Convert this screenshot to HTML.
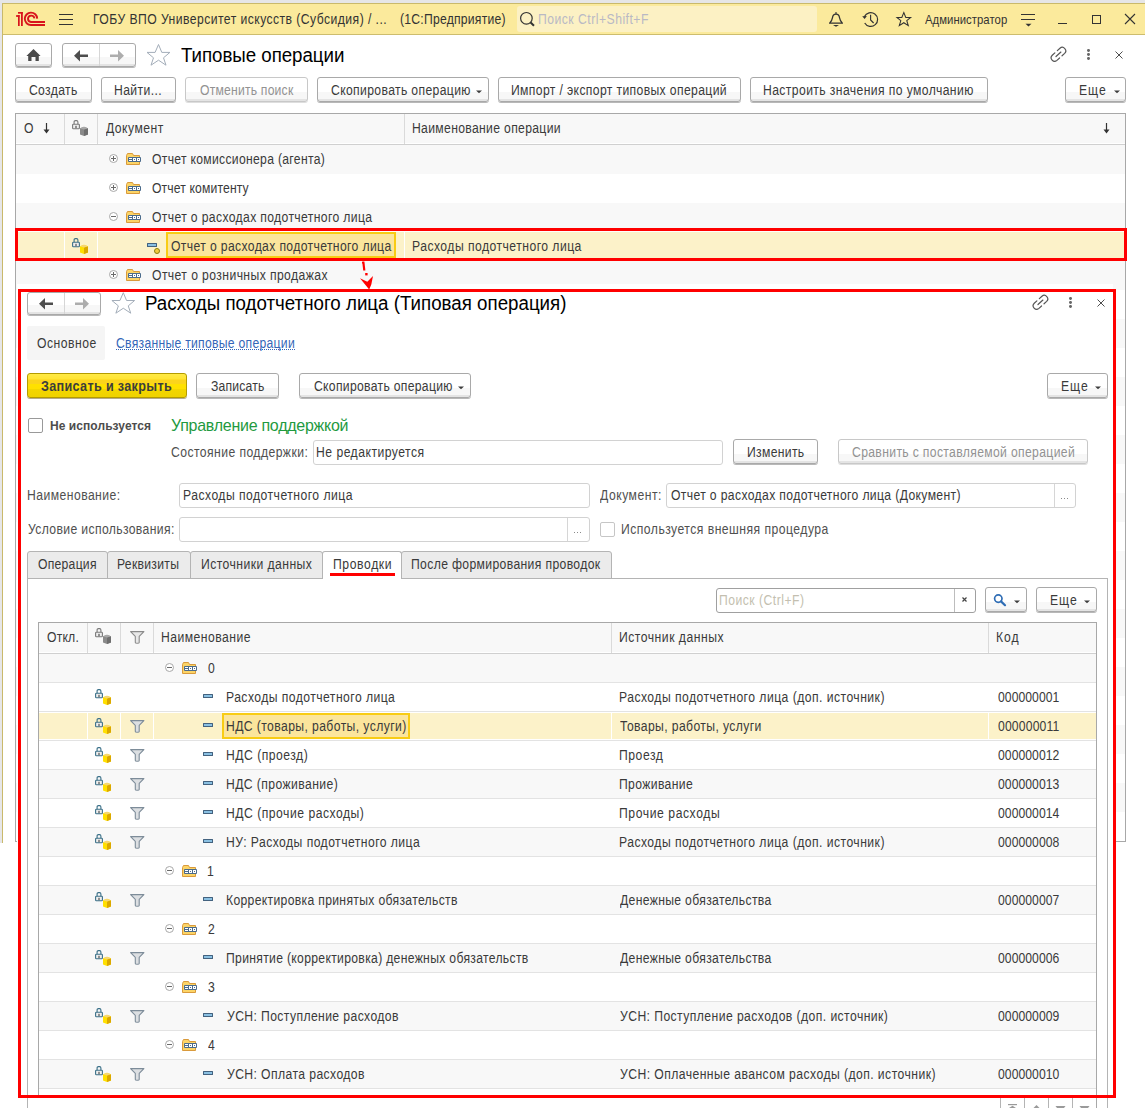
<!DOCTYPE html>
<html><head><meta charset="utf-8"><style>
*{box-sizing:border-box;margin:0;padding:0}
html,body{width:1145px;height:1108px;overflow:hidden;background:#fff}
body{position:relative;font-family:"Liberation Sans",sans-serif;font-size:13px;color:#333}
.a{position:absolute}
.t{position:absolute;white-space:nowrap;font-size:13px;line-height:16px;color:#333}
.btn{position:absolute;border:1px solid #a9a9a9;border-radius:3px;background:linear-gradient(to bottom,#fff 0,#fff calc(100% - 9px),#f7f7f7 calc(100% - 9px),#f7f7f7 calc(100% - 2px),#e4e4e4 calc(100% - 2px));box-shadow:0 1px 0 rgba(0,0,0,.28)}
.dis{border-color:#c4c4c4}
.red{position:absolute;border:3px solid #ff0000}
svg{position:absolute;overflow:visible}
</style></head><body>
<div class="a" style="left:0px;top:0px;width:1145px;height:3px;background:#e6e6e6;"></div>
<div class="a" style="left:0px;top:0px;width:2px;height:843px;background:#e6e6e8;"></div>
<div class="a" style="left:2px;top:3px;width:1143px;height:840px;background:#fff;border-left:1px solid #c9b96b;border-top:1px solid #c9b96b"></div>
<div class="a" style="left:3px;top:4px;width:1142px;height:30px;background:#fbea9c;"></div>
<div class="a" style="left:3px;top:34px;width:1142px;height:1px;background:#cdbd6e;"></div>
<div class="a" style="left:517px;top:6px;width:300px;height:26px;background:#fcf1c4;border-radius:3px"></div>
<div class="t" style="left:93.13px;top:11px;font-size:14px;line-height:16px;color:#333;font-weight:400;letter-spacing:0.506px;transform:scaleX(0.87);transform-origin:0 0;">ГОБУ ВПО Университет искусств (Субсидия) / ...</div>
<div class="t" style="left:400.00px;top:11px;font-size:14px;line-height:16px;color:#333;font-weight:400;letter-spacing:0.264px;transform:scaleX(0.87);transform-origin:0 0;">(1С:Предприятие)</div>
<div class="t" style="left:538.13px;top:11px;font-size:14px;line-height:16px;color:#b9b9c4;font-weight:400;letter-spacing:0.557px;transform:scaleX(0.87);transform-origin:0 0;">Поиск Ctrl+Shift+F</div>
<div class="t" style="left:925.00px;top:12px;font-size:13px;line-height:16px;color:#333;font-weight:400;letter-spacing:0.057px;transform:scaleX(0.87);transform-origin:0 0;">Администратор</div>
<div class="btn" style="left:15px;top:43px;width:37px;height:24px;"></div>
<div class="btn" style="left:62px;top:43px;width:74px;height:24px;"></div>
<div class="a" style="left:99px;top:44px;width:1px;height:22px;background:#d6d6d6;"></div>
<div class="t" style="left:180.50px;top:43px;font-size:19.5px;line-height:24px;color:#000;font-weight:400;letter-spacing:-0.048px;transform:scaleX(0.96);transform-origin:0 0;">Типовые операции</div>
<div class="btn" style="left:15px;top:77px;width:77px;height:25px;"></div>
<div class="t" style="left:29.00px;top:82px;font-size:14px;line-height:16px;color:#3a3a3a;font-weight:400;letter-spacing:0.377px;transform:scaleX(0.87);transform-origin:0 0;">Создать</div>
<div class="btn" style="left:101px;top:77px;width:75px;height:25px;"></div>
<div class="t" style="left:114.13px;top:82px;font-size:14px;line-height:16px;color:#3a3a3a;font-weight:400;letter-spacing:0.449px;transform:scaleX(0.87);transform-origin:0 0;">Найти...</div>
<div class="btn" style="left:185px;top:77px;width:123px;height:25px;border-color:#c8c8c8;box-shadow:0 1px 0 rgba(0,0,0,.13)"></div>
<div class="t" style="left:200.00px;top:82px;font-size:14px;line-height:16px;color:#929292;font-weight:400;letter-spacing:0.231px;transform:scaleX(0.87);transform-origin:0 0;">Отменить поиск</div>
<div class="btn" style="left:317px;top:77px;width:172px;height:25px;"></div>
<div class="t" style="left:331.00px;top:82px;font-size:14px;line-height:16px;color:#3a3a3a;font-weight:400;letter-spacing:0.405px;transform:scaleX(0.87);transform-origin:0 0;">Скопировать операцию</div>
<div class="btn" style="left:498px;top:77px;width:243px;height:25px;"></div>
<div class="t" style="left:511.13px;top:82px;font-size:14px;line-height:16px;color:#3a3a3a;font-weight:400;letter-spacing:0.414px;transform:scaleX(0.87);transform-origin:0 0;">Импорт / экспорт типовых операций</div>
<div class="btn" style="left:750px;top:77px;width:238px;height:25px;"></div>
<div class="t" style="left:763.13px;top:82px;font-size:14px;line-height:16px;color:#3a3a3a;font-weight:400;letter-spacing:0.450px;transform:scaleX(0.87);transform-origin:0 0;">Настроить значения по умолчанию</div>
<div class="btn" style="left:1065px;top:77px;width:61px;height:25px;"></div>
<div class="t" style="left:1079.13px;top:82px;font-size:14px;line-height:16px;color:#3a3a3a;font-weight:400;letter-spacing:1.093px;transform:scaleX(0.87);transform-origin:0 0;">Еще</div>
<div class="a" style="left:15px;top:113px;width:1111px;height:729px;background:#fff;border:1px solid #a8a8a8;border-bottom:none"></div>
<div class="a" style="left:16px;top:114px;width:1109px;height:29px;background:#f8f8f8;"></div>
<div class="a" style="left:16px;top:144px;width:1109px;height:1px;background:#d0d0d0;"></div>
<div class="a" style="left:64px;top:114px;width:1px;height:30px;background:#dadada;"></div>
<div class="a" style="left:97px;top:114px;width:1px;height:30px;background:#dadada;"></div>
<div class="a" style="left:404px;top:114px;width:1px;height:30px;background:#dadada;"></div>
<div class="a" style="left:16px;top:145px;width:1109px;height:29px;background:#f8f8f8;"></div>
<div class="a" style="left:16px;top:203px;width:1109px;height:29px;background:#f8f8f8;"></div>
<div class="a" style="left:16px;top:231px;width:1109px;height:1px;background:#fff;"></div>
<div class="a" style="left:16px;top:232px;width:1109px;height:28px;background:#fcf2c9;"></div>
<div class="a" style="left:16px;top:261px;width:1109px;height:29px;background:#f8f8f8;"></div>
<div class="a" style="left:16px;top:319px;width:1109px;height:29px;background:#f8f8f8;"></div>
<div class="a" style="left:16px;top:377px;width:1109px;height:29px;background:#f8f8f8;"></div>
<div class="a" style="left:16px;top:435px;width:1109px;height:29px;background:#f8f8f8;"></div>
<div class="a" style="left:16px;top:493px;width:1109px;height:29px;background:#f8f8f8;"></div>
<div class="a" style="left:16px;top:551px;width:1109px;height:29px;background:#f8f8f8;"></div>
<div class="a" style="left:16px;top:609px;width:1109px;height:29px;background:#f8f8f8;"></div>
<div class="a" style="left:16px;top:667px;width:1109px;height:29px;background:#f8f8f8;"></div>
<div class="a" style="left:16px;top:725px;width:1109px;height:29px;background:#f8f8f8;"></div>
<div class="a" style="left:16px;top:783px;width:1109px;height:29px;background:#f8f8f8;"></div>
<div class="a" style="left:15px;top:841px;width:1111px;height:1px;background:#a8a8a8;"></div>
<div class="t" style="left:24.00px;top:120px;font-size:14px;line-height:16px;color:#3a3a3a;font-weight:400;letter-spacing:0.000px;transform:scaleX(0.87);transform-origin:0 0;">О</div>
<div class="t" style="left:106.00px;top:120px;font-size:14px;line-height:16px;color:#3a3a3a;font-weight:400;letter-spacing:0.521px;transform:scaleX(0.87);transform-origin:0 0;">Документ</div>
<div class="t" style="left:412.13px;top:120px;font-size:14px;line-height:16px;color:#3a3a3a;font-weight:400;letter-spacing:0.373px;transform:scaleX(0.87);transform-origin:0 0;">Наименование операции</div>
<div class="t" style="left:151.50px;top:151px;font-size:14px;line-height:16px;color:#3a3a3a;font-weight:400;letter-spacing:0.339px;transform:scaleX(0.87);transform-origin:0 0;">Отчет комиссионера (агента)</div>
<div class="t" style="left:151.50px;top:180px;font-size:14px;line-height:16px;color:#3a3a3a;font-weight:400;letter-spacing:0.148px;transform:scaleX(0.87);transform-origin:0 0;">Отчет комитенту</div>
<div class="t" style="left:151.50px;top:209px;font-size:14px;line-height:16px;color:#3a3a3a;font-weight:400;letter-spacing:0.404px;transform:scaleX(0.87);transform-origin:0 0;">Отчет о расходах подотчетного лица</div>
<div class="t" style="left:151.50px;top:267px;font-size:14px;line-height:16px;color:#3a3a3a;font-weight:400;letter-spacing:0.461px;transform:scaleX(0.87);transform-origin:0 0;">Отчет о розничных продажах</div>
<div class="a" style="left:64px;top:232px;width:1px;height:28px;background:#fff;"></div>
<div class="a" style="left:97px;top:232px;width:1px;height:28px;background:#fff;"></div>
<div class="a" style="left:404px;top:232px;width:1px;height:28px;background:#fff;"></div>
<div class="a" style="left:166px;top:232px;width:230px;height:26px;background:#fbe59c;border:2px solid #f8cc14"></div>
<div class="t" style="left:170.50px;top:238px;font-size:14px;line-height:16px;color:#3a3a3a;font-weight:400;letter-spacing:0.411px;transform:scaleX(0.87);transform-origin:0 0;">Отчет о расходах подотчетного лица</div>
<div class="t" style="left:412.13px;top:238px;font-size:14px;line-height:16px;color:#3a3a3a;font-weight:400;letter-spacing:0.527px;transform:scaleX(0.87);transform-origin:0 0;">Расходы подотчетного лица</div>
<div class="a" style="left:17px;top:284px;width:1096px;height:824px;background:#fff;"></div>
<div class="btn" style="left:27px;top:292px;width:74px;height:23px;"></div>
<div class="a" style="left:64px;top:293px;width:1px;height:21px;background:#d6d6d6;"></div>
<div class="t" style="left:145.04px;top:291px;font-size:19.5px;line-height:24px;color:#000;font-weight:400;letter-spacing:0.004px;transform:scaleX(0.96);transform-origin:0 0;">Расходы подотчетного лица (Типовая операция)</div>
<div class="a" style="left:27px;top:326px;width:78px;height:34px;background:#f5f5f5;border-radius:2px"></div>
<div class="t" style="left:37.00px;top:335px;font-size:14px;line-height:16px;color:#3a3a3a;font-weight:400;letter-spacing:0.549px;transform:scaleX(0.87);transform-origin:0 0;">Основное</div>
<div class="t" style="left:116.00px;top:335px;font-size:14px;line-height:16px;color:#3566b8;font-weight:400;letter-spacing:0.315px;transform:scaleX(0.87);transform-origin:0 0;">Связанные типовые операции</div>
<div class="a" style="left:116px;top:349px;width:179px;height:1px;background:transparent;border-top:1px dotted #3566b8"></div>
<div class="a" style="left:27px;top:373px;width:160px;height:25px;border:1px solid #b49c00;border-radius:3px;background:linear-gradient(to bottom,#ffea45 0,#ffe433 5px,#fbd41c 6px,#fbd41c 10px,#ffe100 10px,#ffe000 15px,#f3d600 15px,#efd200 100%);box-shadow:0 1px 0 rgba(90,70,0,.45)"></div>
<div class="t" style="left:41.00px;top:378px;font-size:14px;line-height:16px;color:#3d3d3d;font-weight:700;letter-spacing:0.377px;transform:scaleX(0.9);transform-origin:0 0;">Записать и закрыть</div>
<div class="btn" style="left:196px;top:373px;width:83px;height:25px;"></div>
<div class="t" style="left:211.00px;top:378px;font-size:14px;line-height:16px;color:#3a3a3a;font-weight:400;letter-spacing:0.198px;transform:scaleX(0.87);transform-origin:0 0;">Записать</div>
<div class="btn" style="left:299px;top:373px;width:172px;height:25px;"></div>
<div class="t" style="left:314.00px;top:378px;font-size:14px;line-height:16px;color:#3a3a3a;font-weight:400;letter-spacing:0.345px;transform:scaleX(0.87);transform-origin:0 0;">Скопировать операцию</div>
<div class="btn" style="left:1047px;top:373px;width:61px;height:25px;"></div>
<div class="t" style="left:1061.13px;top:378px;font-size:14px;line-height:16px;color:#3a3a3a;font-weight:400;letter-spacing:1.093px;transform:scaleX(0.87);transform-origin:0 0;">Еще</div>
<div class="a" style="left:28px;top:418px;width:15px;height:15px;background:#fff;border:1px solid #999;border-radius:2px"></div>
<div class="t" style="left:50.00px;top:418px;font-size:12px;line-height:16px;color:#4d4d4d;font-weight:700;letter-spacing:0.065px;">Не используется</div>
<div class="t" style="left:171.00px;top:416px;font-size:17px;line-height:20px;color:#1f9a3f;font-weight:400;letter-spacing:-0.271px;transform:scaleX(0.94);transform-origin:0 0;">Управление поддержкой</div>
<div class="t" style="left:171.00px;top:444px;font-size:14px;line-height:16px;color:#505050;font-weight:400;letter-spacing:0.489px;transform:scaleX(0.87);transform-origin:0 0;">Состояние поддержки:</div>
<div class="a" style="left:313px;top:440px;width:410px;height:25px;background:#fff;border:1px solid #d2d2d2;border-radius:3px"></div>
<div class="t" style="left:316.13px;top:444px;font-size:14px;line-height:16px;color:#3a3a3a;font-weight:400;letter-spacing:0.547px;transform:scaleX(0.87);transform-origin:0 0;">Не редактируется</div>
<div class="btn" style="left:733px;top:439px;width:85px;height:25px;"></div>
<div class="t" style="left:747.13px;top:444px;font-size:14px;line-height:16px;color:#3a3a3a;font-weight:400;letter-spacing:0.359px;transform:scaleX(0.87);transform-origin:0 0;">Изменить</div>
<div class="btn" style="left:838px;top:439px;width:250px;height:25px;border-color:#c8c8c8;box-shadow:0 1px 0 rgba(0,0,0,.13)"></div>
<div class="t" style="left:852.00px;top:444px;font-size:14px;line-height:16px;color:#929292;font-weight:400;letter-spacing:0.390px;transform:scaleX(0.87);transform-origin:0 0;">Сравнить с поставляемой операцией</div>
<div class="t" style="left:26.63px;top:487px;font-size:14px;line-height:16px;color:#505050;font-weight:400;letter-spacing:0.510px;transform:scaleX(0.87);transform-origin:0 0;">Наименование:</div>
<div class="a" style="left:179px;top:483px;width:411px;height:25px;background:#fff;border:1px solid #d2d2d2;border-radius:3px"></div>
<div class="t" style="left:182.63px;top:487px;font-size:14px;line-height:16px;color:#3a3a3a;font-weight:400;letter-spacing:0.532px;transform:scaleX(0.87);transform-origin:0 0;">Расходы подотчетного лица</div>
<div class="t" style="left:600.00px;top:487px;font-size:14px;line-height:16px;color:#505050;font-weight:400;letter-spacing:0.579px;transform:scaleX(0.87);transform-origin:0 0;">Документ:</div>
<div class="a" style="left:666px;top:483px;width:410px;height:25px;background:#fff;border:1px solid #d2d2d2;border-radius:3px"></div>
<div class="a" style="left:1054px;top:484px;width:1px;height:23px;background:#d6d6d6;"></div>
<div class="a" style="left:1061px;top:498px;width:1px;height:1px;background:#8a8a8a;"></div>
<div class="a" style="left:1064px;top:498px;width:1px;height:1px;background:#8a8a8a;"></div>
<div class="a" style="left:1067px;top:498px;width:1px;height:1px;background:#8a8a8a;"></div>
<div class="t" style="left:671.00px;top:487px;font-size:14px;line-height:16px;color:#3a3a3a;font-weight:400;letter-spacing:0.408px;transform:scaleX(0.87);transform-origin:0 0;">Отчет о расходах подотчетного лица (Документ)</div>
<div class="t" style="left:27.50px;top:521px;font-size:14px;line-height:16px;color:#505050;font-weight:400;letter-spacing:0.412px;transform:scaleX(0.87);transform-origin:0 0;">Условие использования:</div>
<div class="a" style="left:179px;top:517px;width:411px;height:25px;background:#fff;border:1px solid #d2d2d2;border-radius:3px"></div>
<div class="a" style="left:567px;top:518px;width:1px;height:23px;background:#d6d6d6;"></div>
<div class="a" style="left:574px;top:532px;width:1px;height:1px;background:#8a8a8a;"></div>
<div class="a" style="left:577px;top:532px;width:1px;height:1px;background:#8a8a8a;"></div>
<div class="a" style="left:580px;top:532px;width:1px;height:1px;background:#8a8a8a;"></div>
<div class="a" style="left:600px;top:522px;width:15px;height:15px;background:#fff;border:1px solid #c6c6c6;border-radius:2px"></div>
<div class="t" style="left:620.63px;top:521px;font-size:14px;line-height:16px;color:#505050;font-weight:400;letter-spacing:0.535px;transform:scaleX(0.87);transform-origin:0 0;">Используется внешняя процедура</div>
<div class="a" style="left:27px;top:551px;width:81px;height:28px;background:#ebebeb;border:1px solid #b4b4b4;border-radius:3px 3px 0 0"></div>
<div class="t" style="left:38.00px;top:556px;font-size:14px;line-height:16px;color:#3a3a3a;font-weight:400;letter-spacing:0.286px;transform:scaleX(0.87);transform-origin:0 0;">Операция</div>
<div class="a" style="left:107px;top:551px;width:84px;height:28px;background:#ebebeb;border:1px solid #b4b4b4;border-radius:3px 3px 0 0"></div>
<div class="t" style="left:117.13px;top:556px;font-size:14px;line-height:16px;color:#3a3a3a;font-weight:400;letter-spacing:0.321px;transform:scaleX(0.87);transform-origin:0 0;">Реквизиты</div>
<div class="a" style="left:190px;top:551px;width:133px;height:28px;background:#ebebeb;border:1px solid #b4b4b4;border-radius:3px 3px 0 0"></div>
<div class="t" style="left:201.13px;top:556px;font-size:14px;line-height:16px;color:#3a3a3a;font-weight:400;letter-spacing:0.499px;transform:scaleX(0.87);transform-origin:0 0;">Источники данных</div>
<div class="a" style="left:401px;top:551px;width:211px;height:28px;background:#ebebeb;border:1px solid #b4b4b4;border-radius:3px 3px 0 0"></div>
<div class="t" style="left:411.13px;top:556px;font-size:14px;line-height:16px;color:#3a3a3a;font-weight:400;letter-spacing:0.403px;transform:scaleX(0.87);transform-origin:0 0;">После формирования проводок</div>
<div class="a" style="left:27px;top:578px;width:1081px;height:540px;background:#fff;border:1px solid #b4b4b4"></div>
<div class="a" style="left:322px;top:551px;width:80px;height:28px;background:#fff;border:1px solid #b4b4b4;border-bottom:none;border-radius:3px 3px 0 0"></div>
<div class="t" style="left:333.13px;top:556px;font-size:14px;line-height:16px;color:#3a3a3a;font-weight:400;letter-spacing:0.690px;transform:scaleX(0.87);transform-origin:0 0;">Проводки</div>
<div class="a" style="left:330px;top:573px;width:65px;height:3px;background:#ff0000;"></div>
<div class="a" style="left:716px;top:588px;width:260px;height:25px;background:#fff;border:1px solid #a0a0a0;border-radius:3px"></div>
<div class="a" style="left:954px;top:589px;width:1px;height:23px;background:#bdbdbd;"></div>
<div class="t" style="left:718.63px;top:592px;font-size:14px;line-height:16px;color:#c4bfb0;font-weight:400;letter-spacing:0.549px;transform:scaleX(0.87);transform-origin:0 0;">Поиск (Ctrl+F)</div>
<div class="btn" style="left:985px;top:587px;width:42px;height:25px;"></div>
<div class="btn" style="left:1036px;top:587px;width:61px;height:25px;"></div>
<div class="t" style="left:1050.13px;top:592px;font-size:14px;line-height:16px;color:#3a3a3a;font-weight:400;letter-spacing:1.093px;transform:scaleX(0.87);transform-origin:0 0;">Еще</div>
<div class="a" style="left:38px;top:622px;width:1059px;height:474px;background:#fff;border:1px solid #a8a8a8"></div>
<div class="a" style="left:39px;top:623px;width:1057px;height:29px;background:#f8f8f8;"></div>
<div class="a" style="left:39px;top:653px;width:1057px;height:1px;background:#d0d0d0;"></div>
<div class="a" style="left:87px;top:623px;width:1px;height:30px;background:#dadada;"></div>
<div class="a" style="left:120px;top:623px;width:1px;height:30px;background:#dadada;"></div>
<div class="a" style="left:153px;top:623px;width:1px;height:30px;background:#dadada;"></div>
<div class="a" style="left:611px;top:623px;width:1px;height:30px;background:#dadada;"></div>
<div class="a" style="left:988px;top:623px;width:1px;height:30px;background:#dadada;"></div>
<div class="a" style="left:39px;top:654px;width:1057px;height:28px;background:#f8f8f8;"></div>
<div class="a" style="left:39px;top:682px;width:1057px;height:1px;background:#e3e3e3;"></div>
<div class="a" style="left:39px;top:683px;width:1057px;height:28px;background:#fff;"></div>
<div class="a" style="left:39px;top:711px;width:1057px;height:1px;background:#e3e3e3;"></div>
<div class="a" style="left:39px;top:712px;width:1057px;height:28px;background:#fcf2c9;"></div>
<div class="a" style="left:39px;top:740px;width:1057px;height:1px;background:#e3e3e3;"></div>
<div class="a" style="left:39px;top:741px;width:1057px;height:28px;background:#fff;"></div>
<div class="a" style="left:39px;top:769px;width:1057px;height:1px;background:#e3e3e3;"></div>
<div class="a" style="left:39px;top:770px;width:1057px;height:28px;background:#f8f8f8;"></div>
<div class="a" style="left:39px;top:798px;width:1057px;height:1px;background:#e3e3e3;"></div>
<div class="a" style="left:39px;top:799px;width:1057px;height:28px;background:#fff;"></div>
<div class="a" style="left:39px;top:827px;width:1057px;height:1px;background:#e3e3e3;"></div>
<div class="a" style="left:39px;top:828px;width:1057px;height:28px;background:#f8f8f8;"></div>
<div class="a" style="left:39px;top:856px;width:1057px;height:1px;background:#e3e3e3;"></div>
<div class="a" style="left:39px;top:857px;width:1057px;height:28px;background:#fff;"></div>
<div class="a" style="left:39px;top:885px;width:1057px;height:1px;background:#e3e3e3;"></div>
<div class="a" style="left:39px;top:886px;width:1057px;height:28px;background:#f8f8f8;"></div>
<div class="a" style="left:39px;top:914px;width:1057px;height:1px;background:#e3e3e3;"></div>
<div class="a" style="left:39px;top:915px;width:1057px;height:28px;background:#fff;"></div>
<div class="a" style="left:39px;top:943px;width:1057px;height:1px;background:#e3e3e3;"></div>
<div class="a" style="left:39px;top:944px;width:1057px;height:28px;background:#f8f8f8;"></div>
<div class="a" style="left:39px;top:972px;width:1057px;height:1px;background:#e3e3e3;"></div>
<div class="a" style="left:39px;top:973px;width:1057px;height:28px;background:#fff;"></div>
<div class="a" style="left:39px;top:1001px;width:1057px;height:1px;background:#e3e3e3;"></div>
<div class="a" style="left:39px;top:1002px;width:1057px;height:28px;background:#f8f8f8;"></div>
<div class="a" style="left:39px;top:1030px;width:1057px;height:1px;background:#e3e3e3;"></div>
<div class="a" style="left:39px;top:1031px;width:1057px;height:28px;background:#fff;"></div>
<div class="a" style="left:39px;top:1059px;width:1057px;height:1px;background:#e3e3e3;"></div>
<div class="a" style="left:39px;top:1060px;width:1057px;height:28px;background:#f8f8f8;"></div>
<div class="a" style="left:39px;top:1088px;width:1057px;height:1px;background:#e3e3e3;"></div>
<div class="a" style="left:39px;top:712px;width:1057px;height:28px;background:#fff;"></div>
<div class="a" style="left:39px;top:713px;width:1057px;height:26px;background:#fcf2c9;"></div>
<div class="a" style="left:87px;top:713px;width:1px;height:26px;background:#fff;"></div>
<div class="a" style="left:120px;top:713px;width:1px;height:26px;background:#fff;"></div>
<div class="a" style="left:153px;top:713px;width:1px;height:26px;background:#fff;"></div>
<div class="a" style="left:611px;top:713px;width:1px;height:26px;background:#fff;"></div>
<div class="a" style="left:988px;top:713px;width:1px;height:26px;background:#fff;"></div>
<div class="a" style="left:222px;top:713px;width:188px;height:26px;background:#fbe59c;border:2px solid #f8cc14"></div>
<div class="t" style="left:47.00px;top:629px;font-size:14px;line-height:16px;color:#3a3a3a;font-weight:400;letter-spacing:0.220px;transform:scaleX(0.87);transform-origin:0 0;">Откл.</div>
<div class="t" style="left:161.13px;top:629px;font-size:14px;line-height:16px;color:#3a3a3a;font-weight:400;letter-spacing:0.537px;transform:scaleX(0.87);transform-origin:0 0;">Наименование</div>
<div class="t" style="left:619.13px;top:629px;font-size:14px;line-height:16px;color:#3a3a3a;font-weight:400;letter-spacing:0.570px;transform:scaleX(0.87);transform-origin:0 0;">Источник данных</div>
<div class="t" style="left:996.13px;top:629px;font-size:14px;line-height:16px;color:#3a3a3a;font-weight:400;letter-spacing:1.049px;transform:scaleX(0.87);transform-origin:0 0;">Код</div>
<div class="t" style="left:207.50px;top:660px;font-size:14px;line-height:16px;color:#3a3a3a;font-weight:400;letter-spacing:0.000px;transform:scaleX(0.87);transform-origin:0 0;">0</div>
<div class="t" style="left:225.63px;top:689px;font-size:14px;line-height:16px;color:#3a3a3a;font-weight:400;letter-spacing:0.504px;transform:scaleX(0.87);transform-origin:0 0;">Расходы подотчетного лица</div>
<div class="t" style="left:619.13px;top:689px;font-size:14px;line-height:16px;color:#3a3a3a;font-weight:400;letter-spacing:0.526px;transform:scaleX(0.87);transform-origin:0 0;">Расходы подотчетного лица (доп. источник)</div>
<div class="t" style="left:997.50px;top:689px;font-size:14px;line-height:16px;color:#3a3a3a;font-weight:400;letter-spacing:0.050px;transform:scaleX(0.87);transform-origin:0 0;">000000001</div>
<div class="t" style="left:225.63px;top:718px;font-size:14px;line-height:16px;color:#3a3a3a;font-weight:400;letter-spacing:0.454px;transform:scaleX(0.87);transform-origin:0 0;">НДС (товары, работы, услуги)</div>
<div class="t" style="left:620.00px;top:718px;font-size:14px;line-height:16px;color:#3a3a3a;font-weight:400;letter-spacing:0.445px;transform:scaleX(0.87);transform-origin:0 0;">Товары, работы, услуги</div>
<div class="t" style="left:997.50px;top:718px;font-size:14px;line-height:16px;color:#3a3a3a;font-weight:400;letter-spacing:0.180px;transform:scaleX(0.87);transform-origin:0 0;">000000011</div>
<div class="t" style="left:225.63px;top:747px;font-size:14px;line-height:16px;color:#3a3a3a;font-weight:400;letter-spacing:0.558px;transform:scaleX(0.87);transform-origin:0 0;">НДС (проезд)</div>
<div class="t" style="left:619.13px;top:747px;font-size:14px;line-height:16px;color:#3a3a3a;font-weight:400;letter-spacing:0.617px;transform:scaleX(0.87);transform-origin:0 0;">Проезд</div>
<div class="t" style="left:997.50px;top:747px;font-size:14px;line-height:16px;color:#3a3a3a;font-weight:400;letter-spacing:0.050px;transform:scaleX(0.87);transform-origin:0 0;">000000012</div>
<div class="t" style="left:225.63px;top:776px;font-size:14px;line-height:16px;color:#3a3a3a;font-weight:400;letter-spacing:0.463px;transform:scaleX(0.87);transform-origin:0 0;">НДС (проживание)</div>
<div class="t" style="left:619.13px;top:776px;font-size:14px;line-height:16px;color:#3a3a3a;font-weight:400;letter-spacing:0.416px;transform:scaleX(0.87);transform-origin:0 0;">Проживание</div>
<div class="t" style="left:997.50px;top:776px;font-size:14px;line-height:16px;color:#3a3a3a;font-weight:400;letter-spacing:0.050px;transform:scaleX(0.87);transform-origin:0 0;">000000013</div>
<div class="t" style="left:225.63px;top:805px;font-size:14px;line-height:16px;color:#3a3a3a;font-weight:400;letter-spacing:0.567px;transform:scaleX(0.87);transform-origin:0 0;">НДС (прочие расходы)</div>
<div class="t" style="left:619.13px;top:805px;font-size:14px;line-height:16px;color:#3a3a3a;font-weight:400;letter-spacing:0.648px;transform:scaleX(0.87);transform-origin:0 0;">Прочие расходы</div>
<div class="t" style="left:997.50px;top:805px;font-size:14px;line-height:16px;color:#3a3a3a;font-weight:400;letter-spacing:0.050px;transform:scaleX(0.87);transform-origin:0 0;">000000014</div>
<div class="t" style="left:225.63px;top:834px;font-size:14px;line-height:16px;color:#3a3a3a;font-weight:400;letter-spacing:0.508px;transform:scaleX(0.87);transform-origin:0 0;">НУ: Расходы подотчетного лица</div>
<div class="t" style="left:619.13px;top:834px;font-size:14px;line-height:16px;color:#3a3a3a;font-weight:400;letter-spacing:0.526px;transform:scaleX(0.87);transform-origin:0 0;">Расходы подотчетного лица (доп. источник)</div>
<div class="t" style="left:997.50px;top:834px;font-size:14px;line-height:16px;color:#3a3a3a;font-weight:400;letter-spacing:0.050px;transform:scaleX(0.87);transform-origin:0 0;">000000008</div>
<div class="t" style="left:206.63px;top:863px;font-size:14px;line-height:16px;color:#3a3a3a;font-weight:400;letter-spacing:0.000px;transform:scaleX(0.87);transform-origin:0 0;">1</div>
<div class="t" style="left:225.63px;top:892px;font-size:14px;line-height:16px;color:#3a3a3a;font-weight:400;letter-spacing:0.364px;transform:scaleX(0.87);transform-origin:0 0;">Корректировка принятых обязательств</div>
<div class="t" style="left:620.00px;top:892px;font-size:14px;line-height:16px;color:#3a3a3a;font-weight:400;letter-spacing:0.374px;transform:scaleX(0.87);transform-origin:0 0;">Денежные обязательства</div>
<div class="t" style="left:997.50px;top:892px;font-size:14px;line-height:16px;color:#3a3a3a;font-weight:400;letter-spacing:0.050px;transform:scaleX(0.87);transform-origin:0 0;">000000007</div>
<div class="t" style="left:207.50px;top:921px;font-size:14px;line-height:16px;color:#3a3a3a;font-weight:400;letter-spacing:0.000px;transform:scaleX(0.87);transform-origin:0 0;">2</div>
<div class="t" style="left:225.63px;top:950px;font-size:14px;line-height:16px;color:#3a3a3a;font-weight:400;letter-spacing:0.354px;transform:scaleX(0.87);transform-origin:0 0;">Принятие (корректировка) денежных обязательств</div>
<div class="t" style="left:620.00px;top:950px;font-size:14px;line-height:16px;color:#3a3a3a;font-weight:400;letter-spacing:0.374px;transform:scaleX(0.87);transform-origin:0 0;">Денежные обязательства</div>
<div class="t" style="left:997.50px;top:950px;font-size:14px;line-height:16px;color:#3a3a3a;font-weight:400;letter-spacing:0.050px;transform:scaleX(0.87);transform-origin:0 0;">000000006</div>
<div class="t" style="left:207.50px;top:979px;font-size:14px;line-height:16px;color:#3a3a3a;font-weight:400;letter-spacing:0.000px;transform:scaleX(0.87);transform-origin:0 0;">3</div>
<div class="t" style="left:226.50px;top:1008px;font-size:14px;line-height:16px;color:#3a3a3a;font-weight:400;letter-spacing:0.448px;transform:scaleX(0.87);transform-origin:0 0;">УСН: Поступление расходов</div>
<div class="t" style="left:620.00px;top:1008px;font-size:14px;line-height:16px;color:#3a3a3a;font-weight:400;letter-spacing:0.487px;transform:scaleX(0.87);transform-origin:0 0;">УСН: Поступление расходов (доп. источник)</div>
<div class="t" style="left:997.50px;top:1008px;font-size:14px;line-height:16px;color:#3a3a3a;font-weight:400;letter-spacing:0.050px;transform:scaleX(0.87);transform-origin:0 0;">000000009</div>
<div class="t" style="left:207.50px;top:1037px;font-size:14px;line-height:16px;color:#3a3a3a;font-weight:400;letter-spacing:0.000px;transform:scaleX(0.87);transform-origin:0 0;">4</div>
<div class="t" style="left:226.50px;top:1066px;font-size:14px;line-height:16px;color:#3a3a3a;font-weight:400;letter-spacing:0.463px;transform:scaleX(0.87);transform-origin:0 0;">УСН: Оплата расходов</div>
<div class="t" style="left:620.00px;top:1066px;font-size:14px;line-height:16px;color:#3a3a3a;font-weight:400;letter-spacing:0.502px;transform:scaleX(0.87);transform-origin:0 0;">УСН: Оплаченные авансом расходы (доп. источник)</div>
<div class="t" style="left:997.50px;top:1066px;font-size:14px;line-height:16px;color:#3a3a3a;font-weight:400;letter-spacing:0.050px;transform:scaleX(0.87);transform-origin:0 0;">000000010</div>
<div class="a" style="left:1000px;top:1098px;width:1px;height:10px;background:#b4b4b4;"></div>
<div class="a" style="left:1024px;top:1098px;width:1px;height:10px;background:#b4b4b4;"></div>
<div class="a" style="left:1048px;top:1098px;width:1px;height:10px;background:#b4b4b4;"></div>
<div class="a" style="left:1072px;top:1098px;width:1px;height:10px;background:#b4b4b4;"></div>
<svg style="left:0px;top:0px;" width="60" height="34" viewBox="0 0 60 34"><rect x="18" y="12" width="4.8" height="1.7" fill="#d8141c"/><rect x="21" y="12" width="1.8" height="14" fill="#d8141c"/><rect x="16.1" y="15.1" width="3.5" height="1.8" fill="#d8141c"/><rect x="18" y="15.1" width="1.7" height="10.9" fill="#d8141c"/><path d="M37.2,18.6 A6.2,6.2 0 1 0 31,25 L45,25" fill="none" stroke="#d8141c" stroke-width="1.9"/><path d="M34.4,18.4 A3.2,3.2 0 1 0 31,22 L45,22" fill="none" stroke="#d8141c" stroke-width="1.9"/></svg>
<div class="a" style="left:59px;top:14px;width:14px;height:1px;background:#333;height:1.4px"></div>
<div class="a" style="left:59px;top:19px;width:14px;height:1px;background:#333;height:1.4px"></div>
<div class="a" style="left:59px;top:24px;width:14px;height:1px;background:#333;height:1.4px"></div>
<svg style="left:515px;top:6px;" width="30" height="26" viewBox="0 0 30 26"><circle cx="11.4" cy="12.3" r="5.8" fill="none" stroke="#333" stroke-width="1.2"/><path d="M15.6,16.5 L19,19.8" stroke="#333" stroke-width="2"/></svg>
<svg style="left:826px;top:8px;" width="20" height="22" viewBox="0 0 20 22"><rect x="9.4" y="4.1" width="1.2" height="1.8" fill="#333"/><path d="M3.6,15.2 C5.6,13.2 6.2,11.5 6.5,9.6 C6.8,7 7.6,6.1 10,6.1 C12.4,6.1 13.2,7 13.5,9.6 C13.8,11.5 14.4,13.2 16.4,15.2 Z" fill="none" stroke="#333" stroke-width="1.25" stroke-linejoin="round"/><path d="M7,17 L13,17 L10,18.8 Z" fill="#333"/></svg>
<svg style="left:860px;top:9px;" width="22" height="22" viewBox="0 0 22 22"><path d="M4.45,7.58 A6.9,6.9 0 1 1 4.72,13.95" fill="none" stroke="#333" stroke-width="1.2"/><path d="M2.2,7.2 L6.9,7.0 L4.6,9.9 Z" fill="#333"/><path d="M10.6,5.8 L10.6,11 L13.6,14" fill="none" stroke="#333" stroke-width="1.15"/></svg>
<svg style="left:894px;top:9px;" width="20" height="20" viewBox="0 0 20 20"><g transform="translate(9.8 10) scale(0.9) translate(-10 -10)"><path d="M10,2.8 L12.2,8.3 L17.6,8.3 L13.3,11.8 L15,17.3 L10,14.1 L5,17.3 L6.7,11.8 L2.4,8.3 L7.8,8.3 Z" fill="none" stroke="#333" stroke-width="1.15" stroke-linejoin="miter"/></g></svg>
<div class="a" style="left:1021px;top:14px;width:14px;height:1px;background:#333;height:1.3px"></div>
<div class="a" style="left:1021px;top:19px;width:14px;height:1px;background:#333;height:1.3px"></div>
<svg style="left:1024px;top:23px;" width="10" height="5" viewBox="0 0 10 5"><path d="M1.5,0.8 L7.5,0.8 L4.5,3.6 Z" fill="#333"/></svg>
<div class="a" style="left:1058px;top:23px;width:9px;height:1px;background:#333;height:1.3px"></div>
<div class="a" style="left:1092px;top:15px;width:9px;height:9px;background:transparent;border:1.3px solid #333"></div>
<svg style="left:1124px;top:13px;" width="12" height="12" viewBox="0 0 12 12"><path d="M1,1 L11,11 M11,1 L1,11" stroke="#333" stroke-width="1.1"/></svg>
<svg style="left:24px;top:47px;" width="18" height="16" viewBox="0 0 18 16"><path d="M9.5,2 L16.6,9 L14.8,9 L14.8,14 L11.5,14 L11.5,10 L7.5,10 L7.5,14 L4.2,14 L4.2,9 L2.4,9 Z" fill="#4a4a4a"/></svg>
<svg style="left:74px;top:50px;" width="16" height="12" viewBox="0 0 16 12"><path d="M0,5.7 L6,0 L6,4.4 L14,4.4 L14,7 L6,7 L6,11.4 Z" fill="#4d4d4d"/></svg>
<svg style="left:110px;top:50px;" width="16" height="12" viewBox="0 0 16 12"><path d="M14,5.7 L8,0 L8,4.4 L0,4.4 L0,7 L8,7 L8,11.4 Z" fill="#adadad"/></svg>
<svg style="left:39px;top:298px;" width="16" height="12" viewBox="0 0 16 12"><path d="M0,5.7 L6,0 L6,4.4 L14,4.4 L14,7 L6,7 L6,11.4 Z" fill="#4d4d4d"/></svg>
<svg style="left:75px;top:298px;" width="16" height="12" viewBox="0 0 16 12"><path d="M14,5.7 L8,0 L8,4.4 L0,4.4 L0,7 L8,7 L8,11.4 Z" fill="#adadad"/></svg>
<svg style="left:0;top:0" width="1145" height="1108"><polygon points="158.50,44.50 161.80,52.40 169.90,52.40 163.50,57.80 166.00,65.20 158.50,60.20 151.00,65.20 153.50,57.80 147.00,52.40 155.10,52.40" fill="none" stroke="#a3adb9" stroke-width="1"/></svg>
<svg style="left:0;top:0" width="1145" height="1108"><polygon points="123.30,292.70 126.57,300.52 134.59,300.52 128.25,305.87 130.72,313.19 123.30,308.24 115.88,313.19 118.35,305.87 111.91,300.52 119.93,300.52" fill="none" stroke="#a3adb9" stroke-width="1"/></svg>
<svg style="left:1049px;top:45px;" width="18" height="18" viewBox="0 0 18 18"><g fill="none" stroke="#555" stroke-width="1.2" stroke-linecap="round"><path d="M8.33,5.59 L10.95,3.21 A3.5,3.5 0 0 1 15.65,8.39 L13.04,10.77"/><path d="M10.57,13.01 L7.95,15.39 A3.5,3.5 0 0 1 3.25,10.21 L5.86,7.83"/><path d="M6.99,11.54 L11.91,7.06"/></g></svg>
<div class="a" style="left:1087.0px;top:48.800000000000004px;width:2.8px;height:2.8px;border-radius:50%;background:#666"></div>
<div class="a" style="left:1087.0px;top:52.800000000000004px;width:2.8px;height:2.8px;border-radius:50%;background:#666"></div>
<div class="a" style="left:1087.0px;top:56.800000000000004px;width:2.8px;height:2.8px;border-radius:50%;background:#666"></div>
<svg style="left:1114.5px;top:50.5px;" width="8" height="8" viewBox="0 0 8 8"><path d="M0.5,0.5 L7.5,7.5 M7.5,0.5 L0.5,7.5" stroke="#444" stroke-width="0.95"/></svg>
<svg style="left:1031px;top:293px;" width="18" height="18" viewBox="0 0 18 18"><g fill="none" stroke="#555" stroke-width="1.2" stroke-linecap="round"><path d="M8.33,5.59 L10.95,3.21 A3.5,3.5 0 0 1 15.65,8.39 L13.04,10.77"/><path d="M10.57,13.01 L7.95,15.39 A3.5,3.5 0 0 1 3.25,10.21 L5.86,7.83"/><path d="M6.99,11.54 L11.91,7.06"/></g></svg>
<div class="a" style="left:1069.0px;top:296.8px;width:2.8px;height:2.8px;border-radius:50%;background:#666"></div>
<div class="a" style="left:1069.0px;top:300.8px;width:2.8px;height:2.8px;border-radius:50%;background:#666"></div>
<div class="a" style="left:1069.0px;top:304.8px;width:2.8px;height:2.8px;border-radius:50%;background:#666"></div>
<svg style="left:1096.5px;top:298.5px;" width="8" height="8" viewBox="0 0 8 8"><path d="M0.5,0.5 L7.5,7.5 M7.5,0.5 L0.5,7.5" stroke="#444" stroke-width="0.95"/></svg>
<svg style="left:476px;top:89.5px;" width="7" height="4" viewBox="0 0 7 4"><path d="M0,0.5 L6,0.5 L3,3.3 Z" fill="#3c3c3c"/></svg>
<svg style="left:1113.5px;top:89.5px;" width="7" height="4" viewBox="0 0 7 4"><path d="M0,0.5 L6,0.5 L3,3.3 Z" fill="#3c3c3c"/></svg>
<svg style="left:458px;top:386px;" width="7" height="4" viewBox="0 0 7 4"><path d="M0,0.5 L6,0.5 L3,3.3 Z" fill="#3c3c3c"/></svg>
<svg style="left:1095px;top:386px;" width="7" height="4" viewBox="0 0 7 4"><path d="M0,0.5 L6,0.5 L3,3.3 Z" fill="#3c3c3c"/></svg>
<svg style="left:1014px;top:600px;" width="7" height="4" viewBox="0 0 7 4"><path d="M0,0.5 L6,0.5 L3,3.3 Z" fill="#3c3c3c"/></svg>
<svg style="left:1084px;top:600px;" width="7" height="4" viewBox="0 0 7 4"><path d="M0,0.5 L6,0.5 L3,3.3 Z" fill="#3c3c3c"/></svg>
<svg style="left:962px;top:597px;" width="5" height="5" viewBox="0 0 5 5"><path d="M0.5,0.5 L4.5,4.5 M4.5,0.5 L0.5,4.5" stroke="#444" stroke-width="1.2"/></svg>
<svg style="left:990px;top:592px;" width="20" height="18" viewBox="0 0 20 18"><circle cx="8.3" cy="6.6" r="3.7" fill="none" stroke="#2f6db5" stroke-width="1.7"/><path d="M11,9.4 L15,13.2" stroke="#2f6db5" stroke-width="2.2" stroke-linecap="round"/></svg>
<svg style="left:43px;top:123px;" width="8" height="12" viewBox="0 0 8 12"><path d="M3.5,0 L3.5,9" stroke="#333" stroke-width="1.2"/><path d="M0.5,6.5 L3.5,10.5 L6.5,6.5 Z" fill="#333"/></svg>
<svg style="left:1103px;top:123px;" width="8" height="12" viewBox="0 0 8 12"><path d="M3.5,0 L3.5,9" stroke="#333" stroke-width="1.2"/><path d="M0.5,6.5 L3.5,10.5 L6.5,6.5 Z" fill="#333"/></svg>
<svg style="left:72.4px;top:237.5px" width="18" height="18" viewBox="0 0 18 18"><path d="M2.1,4.2 L2.1,1.9 Q2.1,0.6 3.4,0.6 L4.6,0.6 Q5.9,0.6 5.9,1.9 L5.9,4.2" fill="none" stroke="#3b7088" stroke-width="1.1"/><rect x="0.6" y="4.2" width="6.8" height="4.6" rx="0.8" fill="#eee" stroke="#3b7088" stroke-width="1.1"/><rect x="3.5" y="5.8" width="1" height="2.4" fill="#333"/><path d="M8,8.2 L12,6.8 L16,8.2 L16,14.6 L12,16 L8,14.6 Z" fill="#ffdf00"/><path d="M12,9.6 L16,8.2 L16,14.6 L12,16 Z" fill="#dba800"/><path d="M8,8.2 L12,6.8 L16,8.2 L12,9.6 Z" fill="#f6d574"/></svg>
<svg style="left:72.4px;top:120.2px" width="18" height="18" viewBox="0 0 18 18"><path d="M2.1,4.2 L2.1,1.9 Q2.1,0.6 3.4,0.6 L4.6,0.6 Q5.9,0.6 5.9,1.9 L5.9,4.2" fill="none" stroke="#7a7a7a" stroke-width="1.1"/><rect x="0.6" y="4.2" width="6.8" height="4.6" rx="0.8" fill="#eee" stroke="#7a7a7a" stroke-width="1.1"/><rect x="3.5" y="5.8" width="1" height="2.4" fill="#333"/><path d="M8,8.2 L12,6.8 L16,8.2 L16,14.6 L12,16 L8,14.6 Z" fill="#8a8a8a"/><path d="M12,9.6 L16,8.2 L16,14.6 L12,16 Z" fill="#6f6f6f"/><path d="M8,8.2 L12,6.8 L16,8.2 L12,9.6 Z" fill="#a8a8a8"/></svg>
<svg style="left:95.4px;top:628.4px" width="18" height="18" viewBox="0 0 18 18"><path d="M2.1,4.2 L2.1,1.9 Q2.1,0.6 3.4,0.6 L4.6,0.6 Q5.9,0.6 5.9,1.9 L5.9,4.2" fill="none" stroke="#7a7a7a" stroke-width="1.1"/><rect x="0.6" y="4.2" width="6.8" height="4.6" rx="0.8" fill="#eee" stroke="#7a7a7a" stroke-width="1.1"/><rect x="3.5" y="5.8" width="1" height="2.4" fill="#333"/><path d="M8,8.2 L12,6.8 L16,8.2 L16,14.6 L12,16 L8,14.6 Z" fill="#8a8a8a"/><path d="M12,9.6 L16,8.2 L16,14.6 L12,16 Z" fill="#6f6f6f"/><path d="M8,8.2 L12,6.8 L16,8.2 L12,9.6 Z" fill="#a8a8a8"/></svg>
<svg style="left:129.6px;top:630.8px;" width="15" height="13" viewBox="0 0 15 13"><path d="M0.6,0.6 L13.9,0.6 L9.2,5.4 L9.2,11.4 C9.2,12 8.8,12.2 7.25,12.2 C5.7,12.2 5.3,12 5.3,11.4 L5.3,5.4 Z" fill="#e8e8e8" stroke="#8a8a8a" stroke-width="1.1" stroke-linejoin="round"/></svg>
<svg style="left:109px;top:154px;" width="9" height="9" viewBox="0 0 9 9"><circle cx="4.5" cy="4.5" r="4" fill="#fff" stroke="#a9a9a9" stroke-width="1"/><rect x="2" y="4" width="5" height="1" fill="#6a6a6a"/><rect x="4" y="2" width="1" height="5" fill="#6a6a6a"/></svg>
<svg style="left:126px;top:153px;" width="16" height="13" viewBox="0 0 16 13"><path d="M0.5,2.5 L1.5,0.5 L6.5,0.5 L7.5,2.5 L13.5,2.5 L13.5,11.5 L0.5,11.5 Z" fill="#fcd466" stroke="#d99a3c" stroke-width="1" stroke-linejoin="round"/><rect x="2" y="4" width="13" height="5" rx="1" fill="#4b6b8b"/><rect x="3" y="5" width="3" height="1" fill="#fff"/><rect x="3" y="7" width="3" height="1" fill="#fff"/><rect x="7" y="5" width="3" height="3" fill="#fff"/><rect x="11" y="5" width="3" height="3" fill="#fff"/><rect x="8" y="6" width="1" height="1" fill="#4b6b8b"/><rect x="12" y="6" width="1" height="1" fill="#4b6b8b"/></svg>
<svg style="left:109px;top:183px;" width="9" height="9" viewBox="0 0 9 9"><circle cx="4.5" cy="4.5" r="4" fill="#fff" stroke="#a9a9a9" stroke-width="1"/><rect x="2" y="4" width="5" height="1" fill="#6a6a6a"/><rect x="4" y="2" width="1" height="5" fill="#6a6a6a"/></svg>
<svg style="left:126px;top:182px;" width="16" height="13" viewBox="0 0 16 13"><path d="M0.5,2.5 L1.5,0.5 L6.5,0.5 L7.5,2.5 L13.5,2.5 L13.5,11.5 L0.5,11.5 Z" fill="#fcd466" stroke="#d99a3c" stroke-width="1" stroke-linejoin="round"/><rect x="2" y="4" width="13" height="5" rx="1" fill="#4b6b8b"/><rect x="3" y="5" width="3" height="1" fill="#fff"/><rect x="3" y="7" width="3" height="1" fill="#fff"/><rect x="7" y="5" width="3" height="3" fill="#fff"/><rect x="11" y="5" width="3" height="3" fill="#fff"/><rect x="8" y="6" width="1" height="1" fill="#4b6b8b"/><rect x="12" y="6" width="1" height="1" fill="#4b6b8b"/></svg>
<svg style="left:109px;top:212px;" width="9" height="9" viewBox="0 0 9 9"><circle cx="4.5" cy="4.5" r="4" fill="#fff" stroke="#a9a9a9" stroke-width="1"/><rect x="2" y="4" width="5" height="1" fill="#6a6a6a"/></svg>
<svg style="left:126px;top:211px;" width="16" height="13" viewBox="0 0 16 13"><path d="M0.5,2.5 L1.5,0.5 L6.5,0.5 L7.5,2.5 L13.5,2.5 L13.5,11.5 L0.5,11.5 Z" fill="#fcd466" stroke="#d99a3c" stroke-width="1" stroke-linejoin="round"/><rect x="2" y="4" width="13" height="5" rx="1" fill="#4b6b8b"/><rect x="3" y="5" width="3" height="1" fill="#fff"/><rect x="3" y="7" width="3" height="1" fill="#fff"/><rect x="7" y="5" width="3" height="3" fill="#fff"/><rect x="11" y="5" width="3" height="3" fill="#fff"/><rect x="8" y="6" width="1" height="1" fill="#4b6b8b"/><rect x="12" y="6" width="1" height="1" fill="#4b6b8b"/></svg>
<svg style="left:109px;top:270px;" width="9" height="9" viewBox="0 0 9 9"><circle cx="4.5" cy="4.5" r="4" fill="#fff" stroke="#a9a9a9" stroke-width="1"/><rect x="2" y="4" width="5" height="1" fill="#6a6a6a"/><rect x="4" y="2" width="1" height="5" fill="#6a6a6a"/></svg>
<svg style="left:126px;top:269px;" width="16" height="13" viewBox="0 0 16 13"><path d="M0.5,2.5 L1.5,0.5 L6.5,0.5 L7.5,2.5 L13.5,2.5 L13.5,11.5 L0.5,11.5 Z" fill="#fcd466" stroke="#d99a3c" stroke-width="1" stroke-linejoin="round"/><rect x="2" y="4" width="13" height="5" rx="1" fill="#4b6b8b"/><rect x="3" y="5" width="3" height="1" fill="#fff"/><rect x="3" y="7" width="3" height="1" fill="#fff"/><rect x="7" y="5" width="3" height="3" fill="#fff"/><rect x="11" y="5" width="3" height="3" fill="#fff"/><rect x="8" y="6" width="1" height="1" fill="#4b6b8b"/><rect x="12" y="6" width="1" height="1" fill="#4b6b8b"/></svg>
<div class="a" style="left:147px;top:243px;width:10px;height:4px;background:#8ac0e2;border:1px solid #43627f;border-radius:0.5px"></div>
<div class="a" style="left:154px;top:248px;width:6px;height:6px;border-radius:50%;background:#f5cd3c;border:1px solid #8d7f0c"></div>
<svg style="left:165px;top:663px;" width="9" height="9" viewBox="0 0 9 9"><circle cx="4.5" cy="4.5" r="4" fill="#fff" stroke="#a9a9a9" stroke-width="1"/><rect x="2" y="4" width="5" height="1" fill="#6a6a6a"/></svg>
<svg style="left:182px;top:662px;" width="16" height="13" viewBox="0 0 16 13"><path d="M0.5,2.5 L1.5,0.5 L6.5,0.5 L7.5,2.5 L13.5,2.5 L13.5,11.5 L0.5,11.5 Z" fill="#fcd466" stroke="#d99a3c" stroke-width="1" stroke-linejoin="round"/><rect x="2" y="4" width="13" height="5" rx="1" fill="#4b6b8b"/><rect x="3" y="5" width="3" height="1" fill="#fff"/><rect x="3" y="7" width="3" height="1" fill="#fff"/><rect x="7" y="5" width="3" height="3" fill="#fff"/><rect x="11" y="5" width="3" height="3" fill="#fff"/><rect x="8" y="6" width="1" height="1" fill="#4b6b8b"/><rect x="12" y="6" width="1" height="1" fill="#4b6b8b"/></svg>
<div class="a" style="left:203px;top:694px;width:10px;height:4px;background:#8ac0e2;border:1px solid #43627f;border-radius:0.5px"></div>
<svg style="left:95.4px;top:688.6px" width="18" height="18" viewBox="0 0 18 18"><path d="M2.1,4.2 L2.1,1.9 Q2.1,0.6 3.4,0.6 L4.6,0.6 Q5.9,0.6 5.9,1.9 L5.9,4.2" fill="none" stroke="#3b7088" stroke-width="1.1"/><rect x="0.6" y="4.2" width="6.8" height="4.6" rx="0.8" fill="#eee" stroke="#3b7088" stroke-width="1.1"/><rect x="3.5" y="5.8" width="1" height="2.4" fill="#333"/><path d="M8,8.2 L12,6.8 L16,8.2 L16,14.6 L12,16 L8,14.6 Z" fill="#ffdf00"/><path d="M12,9.6 L16,8.2 L16,14.6 L12,16 Z" fill="#dba800"/><path d="M8,8.2 L12,6.8 L16,8.2 L12,9.6 Z" fill="#f6d574"/></svg>
<div class="a" style="left:203px;top:723px;width:10px;height:4px;background:#8ac0e2;border:1px solid #43627f;border-radius:0.5px"></div>
<svg style="left:95.4px;top:717.6px" width="18" height="18" viewBox="0 0 18 18"><path d="M2.1,4.2 L2.1,1.9 Q2.1,0.6 3.4,0.6 L4.6,0.6 Q5.9,0.6 5.9,1.9 L5.9,4.2" fill="none" stroke="#3b7088" stroke-width="1.1"/><rect x="0.6" y="4.2" width="6.8" height="4.6" rx="0.8" fill="#eee" stroke="#3b7088" stroke-width="1.1"/><rect x="3.5" y="5.8" width="1" height="2.4" fill="#333"/><path d="M8,8.2 L12,6.8 L16,8.2 L16,14.6 L12,16 L8,14.6 Z" fill="#ffdf00"/><path d="M12,9.6 L16,8.2 L16,14.6 L12,16 Z" fill="#dba800"/><path d="M8,8.2 L12,6.8 L16,8.2 L12,9.6 Z" fill="#f6d574"/></svg>
<svg style="left:129.6px;top:719.8px;" width="15" height="13" viewBox="0 0 15 13"><path d="M0.6,0.6 L13.9,0.6 L9.2,5.4 L9.2,11.4 C9.2,12 8.8,12.2 7.25,12.2 C5.7,12.2 5.3,12 5.3,11.4 L5.3,5.4 Z" fill="#dcdfe2" stroke="#7d8c99" stroke-width="1.1" stroke-linejoin="round"/></svg>
<div class="a" style="left:203px;top:752px;width:10px;height:4px;background:#8ac0e2;border:1px solid #43627f;border-radius:0.5px"></div>
<svg style="left:95.4px;top:746.6px" width="18" height="18" viewBox="0 0 18 18"><path d="M2.1,4.2 L2.1,1.9 Q2.1,0.6 3.4,0.6 L4.6,0.6 Q5.9,0.6 5.9,1.9 L5.9,4.2" fill="none" stroke="#3b7088" stroke-width="1.1"/><rect x="0.6" y="4.2" width="6.8" height="4.6" rx="0.8" fill="#eee" stroke="#3b7088" stroke-width="1.1"/><rect x="3.5" y="5.8" width="1" height="2.4" fill="#333"/><path d="M8,8.2 L12,6.8 L16,8.2 L16,14.6 L12,16 L8,14.6 Z" fill="#ffdf00"/><path d="M12,9.6 L16,8.2 L16,14.6 L12,16 Z" fill="#dba800"/><path d="M8,8.2 L12,6.8 L16,8.2 L12,9.6 Z" fill="#f6d574"/></svg>
<svg style="left:129.6px;top:748.8px;" width="15" height="13" viewBox="0 0 15 13"><path d="M0.6,0.6 L13.9,0.6 L9.2,5.4 L9.2,11.4 C9.2,12 8.8,12.2 7.25,12.2 C5.7,12.2 5.3,12 5.3,11.4 L5.3,5.4 Z" fill="#dcdfe2" stroke="#7d8c99" stroke-width="1.1" stroke-linejoin="round"/></svg>
<div class="a" style="left:203px;top:781px;width:10px;height:4px;background:#8ac0e2;border:1px solid #43627f;border-radius:0.5px"></div>
<svg style="left:95.4px;top:775.6px" width="18" height="18" viewBox="0 0 18 18"><path d="M2.1,4.2 L2.1,1.9 Q2.1,0.6 3.4,0.6 L4.6,0.6 Q5.9,0.6 5.9,1.9 L5.9,4.2" fill="none" stroke="#3b7088" stroke-width="1.1"/><rect x="0.6" y="4.2" width="6.8" height="4.6" rx="0.8" fill="#eee" stroke="#3b7088" stroke-width="1.1"/><rect x="3.5" y="5.8" width="1" height="2.4" fill="#333"/><path d="M8,8.2 L12,6.8 L16,8.2 L16,14.6 L12,16 L8,14.6 Z" fill="#ffdf00"/><path d="M12,9.6 L16,8.2 L16,14.6 L12,16 Z" fill="#dba800"/><path d="M8,8.2 L12,6.8 L16,8.2 L12,9.6 Z" fill="#f6d574"/></svg>
<svg style="left:129.6px;top:777.8px;" width="15" height="13" viewBox="0 0 15 13"><path d="M0.6,0.6 L13.9,0.6 L9.2,5.4 L9.2,11.4 C9.2,12 8.8,12.2 7.25,12.2 C5.7,12.2 5.3,12 5.3,11.4 L5.3,5.4 Z" fill="#dcdfe2" stroke="#7d8c99" stroke-width="1.1" stroke-linejoin="round"/></svg>
<div class="a" style="left:203px;top:810px;width:10px;height:4px;background:#8ac0e2;border:1px solid #43627f;border-radius:0.5px"></div>
<svg style="left:95.4px;top:804.6px" width="18" height="18" viewBox="0 0 18 18"><path d="M2.1,4.2 L2.1,1.9 Q2.1,0.6 3.4,0.6 L4.6,0.6 Q5.9,0.6 5.9,1.9 L5.9,4.2" fill="none" stroke="#3b7088" stroke-width="1.1"/><rect x="0.6" y="4.2" width="6.8" height="4.6" rx="0.8" fill="#eee" stroke="#3b7088" stroke-width="1.1"/><rect x="3.5" y="5.8" width="1" height="2.4" fill="#333"/><path d="M8,8.2 L12,6.8 L16,8.2 L16,14.6 L12,16 L8,14.6 Z" fill="#ffdf00"/><path d="M12,9.6 L16,8.2 L16,14.6 L12,16 Z" fill="#dba800"/><path d="M8,8.2 L12,6.8 L16,8.2 L12,9.6 Z" fill="#f6d574"/></svg>
<svg style="left:129.6px;top:806.8px;" width="15" height="13" viewBox="0 0 15 13"><path d="M0.6,0.6 L13.9,0.6 L9.2,5.4 L9.2,11.4 C9.2,12 8.8,12.2 7.25,12.2 C5.7,12.2 5.3,12 5.3,11.4 L5.3,5.4 Z" fill="#dcdfe2" stroke="#7d8c99" stroke-width="1.1" stroke-linejoin="round"/></svg>
<div class="a" style="left:203px;top:839px;width:10px;height:4px;background:#8ac0e2;border:1px solid #43627f;border-radius:0.5px"></div>
<svg style="left:95.4px;top:833.6px" width="18" height="18" viewBox="0 0 18 18"><path d="M2.1,4.2 L2.1,1.9 Q2.1,0.6 3.4,0.6 L4.6,0.6 Q5.9,0.6 5.9,1.9 L5.9,4.2" fill="none" stroke="#3b7088" stroke-width="1.1"/><rect x="0.6" y="4.2" width="6.8" height="4.6" rx="0.8" fill="#eee" stroke="#3b7088" stroke-width="1.1"/><rect x="3.5" y="5.8" width="1" height="2.4" fill="#333"/><path d="M8,8.2 L12,6.8 L16,8.2 L16,14.6 L12,16 L8,14.6 Z" fill="#ffdf00"/><path d="M12,9.6 L16,8.2 L16,14.6 L12,16 Z" fill="#dba800"/><path d="M8,8.2 L12,6.8 L16,8.2 L12,9.6 Z" fill="#f6d574"/></svg>
<svg style="left:129.6px;top:835.8px;" width="15" height="13" viewBox="0 0 15 13"><path d="M0.6,0.6 L13.9,0.6 L9.2,5.4 L9.2,11.4 C9.2,12 8.8,12.2 7.25,12.2 C5.7,12.2 5.3,12 5.3,11.4 L5.3,5.4 Z" fill="#dcdfe2" stroke="#7d8c99" stroke-width="1.1" stroke-linejoin="round"/></svg>
<svg style="left:165px;top:866px;" width="9" height="9" viewBox="0 0 9 9"><circle cx="4.5" cy="4.5" r="4" fill="#fff" stroke="#a9a9a9" stroke-width="1"/><rect x="2" y="4" width="5" height="1" fill="#6a6a6a"/></svg>
<svg style="left:182px;top:865px;" width="16" height="13" viewBox="0 0 16 13"><path d="M0.5,2.5 L1.5,0.5 L6.5,0.5 L7.5,2.5 L13.5,2.5 L13.5,11.5 L0.5,11.5 Z" fill="#fcd466" stroke="#d99a3c" stroke-width="1" stroke-linejoin="round"/><rect x="2" y="4" width="13" height="5" rx="1" fill="#4b6b8b"/><rect x="3" y="5" width="3" height="1" fill="#fff"/><rect x="3" y="7" width="3" height="1" fill="#fff"/><rect x="7" y="5" width="3" height="3" fill="#fff"/><rect x="11" y="5" width="3" height="3" fill="#fff"/><rect x="8" y="6" width="1" height="1" fill="#4b6b8b"/><rect x="12" y="6" width="1" height="1" fill="#4b6b8b"/></svg>
<div class="a" style="left:203px;top:897px;width:10px;height:4px;background:#8ac0e2;border:1px solid #43627f;border-radius:0.5px"></div>
<svg style="left:95.4px;top:891.6px" width="18" height="18" viewBox="0 0 18 18"><path d="M2.1,4.2 L2.1,1.9 Q2.1,0.6 3.4,0.6 L4.6,0.6 Q5.9,0.6 5.9,1.9 L5.9,4.2" fill="none" stroke="#3b7088" stroke-width="1.1"/><rect x="0.6" y="4.2" width="6.8" height="4.6" rx="0.8" fill="#eee" stroke="#3b7088" stroke-width="1.1"/><rect x="3.5" y="5.8" width="1" height="2.4" fill="#333"/><path d="M8,8.2 L12,6.8 L16,8.2 L16,14.6 L12,16 L8,14.6 Z" fill="#ffdf00"/><path d="M12,9.6 L16,8.2 L16,14.6 L12,16 Z" fill="#dba800"/><path d="M8,8.2 L12,6.8 L16,8.2 L12,9.6 Z" fill="#f6d574"/></svg>
<svg style="left:129.6px;top:893.8px;" width="15" height="13" viewBox="0 0 15 13"><path d="M0.6,0.6 L13.9,0.6 L9.2,5.4 L9.2,11.4 C9.2,12 8.8,12.2 7.25,12.2 C5.7,12.2 5.3,12 5.3,11.4 L5.3,5.4 Z" fill="#dcdfe2" stroke="#7d8c99" stroke-width="1.1" stroke-linejoin="round"/></svg>
<svg style="left:165px;top:924px;" width="9" height="9" viewBox="0 0 9 9"><circle cx="4.5" cy="4.5" r="4" fill="#fff" stroke="#a9a9a9" stroke-width="1"/><rect x="2" y="4" width="5" height="1" fill="#6a6a6a"/></svg>
<svg style="left:182px;top:923px;" width="16" height="13" viewBox="0 0 16 13"><path d="M0.5,2.5 L1.5,0.5 L6.5,0.5 L7.5,2.5 L13.5,2.5 L13.5,11.5 L0.5,11.5 Z" fill="#fcd466" stroke="#d99a3c" stroke-width="1" stroke-linejoin="round"/><rect x="2" y="4" width="13" height="5" rx="1" fill="#4b6b8b"/><rect x="3" y="5" width="3" height="1" fill="#fff"/><rect x="3" y="7" width="3" height="1" fill="#fff"/><rect x="7" y="5" width="3" height="3" fill="#fff"/><rect x="11" y="5" width="3" height="3" fill="#fff"/><rect x="8" y="6" width="1" height="1" fill="#4b6b8b"/><rect x="12" y="6" width="1" height="1" fill="#4b6b8b"/></svg>
<div class="a" style="left:203px;top:955px;width:10px;height:4px;background:#8ac0e2;border:1px solid #43627f;border-radius:0.5px"></div>
<svg style="left:95.4px;top:949.6px" width="18" height="18" viewBox="0 0 18 18"><path d="M2.1,4.2 L2.1,1.9 Q2.1,0.6 3.4,0.6 L4.6,0.6 Q5.9,0.6 5.9,1.9 L5.9,4.2" fill="none" stroke="#3b7088" stroke-width="1.1"/><rect x="0.6" y="4.2" width="6.8" height="4.6" rx="0.8" fill="#eee" stroke="#3b7088" stroke-width="1.1"/><rect x="3.5" y="5.8" width="1" height="2.4" fill="#333"/><path d="M8,8.2 L12,6.8 L16,8.2 L16,14.6 L12,16 L8,14.6 Z" fill="#ffdf00"/><path d="M12,9.6 L16,8.2 L16,14.6 L12,16 Z" fill="#dba800"/><path d="M8,8.2 L12,6.8 L16,8.2 L12,9.6 Z" fill="#f6d574"/></svg>
<svg style="left:129.6px;top:951.8px;" width="15" height="13" viewBox="0 0 15 13"><path d="M0.6,0.6 L13.9,0.6 L9.2,5.4 L9.2,11.4 C9.2,12 8.8,12.2 7.25,12.2 C5.7,12.2 5.3,12 5.3,11.4 L5.3,5.4 Z" fill="#dcdfe2" stroke="#7d8c99" stroke-width="1.1" stroke-linejoin="round"/></svg>
<svg style="left:165px;top:982px;" width="9" height="9" viewBox="0 0 9 9"><circle cx="4.5" cy="4.5" r="4" fill="#fff" stroke="#a9a9a9" stroke-width="1"/><rect x="2" y="4" width="5" height="1" fill="#6a6a6a"/></svg>
<svg style="left:182px;top:981px;" width="16" height="13" viewBox="0 0 16 13"><path d="M0.5,2.5 L1.5,0.5 L6.5,0.5 L7.5,2.5 L13.5,2.5 L13.5,11.5 L0.5,11.5 Z" fill="#fcd466" stroke="#d99a3c" stroke-width="1" stroke-linejoin="round"/><rect x="2" y="4" width="13" height="5" rx="1" fill="#4b6b8b"/><rect x="3" y="5" width="3" height="1" fill="#fff"/><rect x="3" y="7" width="3" height="1" fill="#fff"/><rect x="7" y="5" width="3" height="3" fill="#fff"/><rect x="11" y="5" width="3" height="3" fill="#fff"/><rect x="8" y="6" width="1" height="1" fill="#4b6b8b"/><rect x="12" y="6" width="1" height="1" fill="#4b6b8b"/></svg>
<div class="a" style="left:203px;top:1013px;width:10px;height:4px;background:#8ac0e2;border:1px solid #43627f;border-radius:0.5px"></div>
<svg style="left:95.4px;top:1007.6px" width="18" height="18" viewBox="0 0 18 18"><path d="M2.1,4.2 L2.1,1.9 Q2.1,0.6 3.4,0.6 L4.6,0.6 Q5.9,0.6 5.9,1.9 L5.9,4.2" fill="none" stroke="#3b7088" stroke-width="1.1"/><rect x="0.6" y="4.2" width="6.8" height="4.6" rx="0.8" fill="#eee" stroke="#3b7088" stroke-width="1.1"/><rect x="3.5" y="5.8" width="1" height="2.4" fill="#333"/><path d="M8,8.2 L12,6.8 L16,8.2 L16,14.6 L12,16 L8,14.6 Z" fill="#ffdf00"/><path d="M12,9.6 L16,8.2 L16,14.6 L12,16 Z" fill="#dba800"/><path d="M8,8.2 L12,6.8 L16,8.2 L12,9.6 Z" fill="#f6d574"/></svg>
<svg style="left:129.6px;top:1009.8px;" width="15" height="13" viewBox="0 0 15 13"><path d="M0.6,0.6 L13.9,0.6 L9.2,5.4 L9.2,11.4 C9.2,12 8.8,12.2 7.25,12.2 C5.7,12.2 5.3,12 5.3,11.4 L5.3,5.4 Z" fill="#dcdfe2" stroke="#7d8c99" stroke-width="1.1" stroke-linejoin="round"/></svg>
<svg style="left:165px;top:1040px;" width="9" height="9" viewBox="0 0 9 9"><circle cx="4.5" cy="4.5" r="4" fill="#fff" stroke="#a9a9a9" stroke-width="1"/><rect x="2" y="4" width="5" height="1" fill="#6a6a6a"/></svg>
<svg style="left:182px;top:1039px;" width="16" height="13" viewBox="0 0 16 13"><path d="M0.5,2.5 L1.5,0.5 L6.5,0.5 L7.5,2.5 L13.5,2.5 L13.5,11.5 L0.5,11.5 Z" fill="#fcd466" stroke="#d99a3c" stroke-width="1" stroke-linejoin="round"/><rect x="2" y="4" width="13" height="5" rx="1" fill="#4b6b8b"/><rect x="3" y="5" width="3" height="1" fill="#fff"/><rect x="3" y="7" width="3" height="1" fill="#fff"/><rect x="7" y="5" width="3" height="3" fill="#fff"/><rect x="11" y="5" width="3" height="3" fill="#fff"/><rect x="8" y="6" width="1" height="1" fill="#4b6b8b"/><rect x="12" y="6" width="1" height="1" fill="#4b6b8b"/></svg>
<div class="a" style="left:203px;top:1071px;width:10px;height:4px;background:#8ac0e2;border:1px solid #43627f;border-radius:0.5px"></div>
<svg style="left:95.4px;top:1065.6px" width="18" height="18" viewBox="0 0 18 18"><path d="M2.1,4.2 L2.1,1.9 Q2.1,0.6 3.4,0.6 L4.6,0.6 Q5.9,0.6 5.9,1.9 L5.9,4.2" fill="none" stroke="#3b7088" stroke-width="1.1"/><rect x="0.6" y="4.2" width="6.8" height="4.6" rx="0.8" fill="#eee" stroke="#3b7088" stroke-width="1.1"/><rect x="3.5" y="5.8" width="1" height="2.4" fill="#333"/><path d="M8,8.2 L12,6.8 L16,8.2 L16,14.6 L12,16 L8,14.6 Z" fill="#ffdf00"/><path d="M12,9.6 L16,8.2 L16,14.6 L12,16 Z" fill="#dba800"/><path d="M8,8.2 L12,6.8 L16,8.2 L12,9.6 Z" fill="#f6d574"/></svg>
<svg style="left:129.6px;top:1067.8px;" width="15" height="13" viewBox="0 0 15 13"><path d="M0.6,0.6 L13.9,0.6 L9.2,5.4 L9.2,11.4 C9.2,12 8.8,12.2 7.25,12.2 C5.7,12.2 5.3,12 5.3,11.4 L5.3,5.4 Z" fill="#dcdfe2" stroke="#7d8c99" stroke-width="1.1" stroke-linejoin="round"/></svg>
<svg style="left:0;top:0" width="1145" height="1108"><path d="M363.3,261.5 L364.3,270.5" stroke="#ff0000" stroke-width="2.2"/><rect x="362" y="262" width="1.5" height="1.5" fill="#ff0000"/><rect x="365.2" y="273" width="2.4" height="2.4" fill="#ff0000"/><polygon points="360,278.2 367.3,281.8 373,276 371.3,284.5 369.2,289.5 365.5,285" fill="#ff0000"/></svg>
<svg style="left:1004px;top:1100px;" width="20" height="8" viewBox="0 0 20 8"><rect x="4" y="4" width="9" height="1.2" fill="#9a9a9a"/><path d="M8.5,5.8 L5,8 L12,8 Z" fill="#9a9a9a"/></svg>
<svg style="left:1028px;top:1100px;" width="20" height="8" viewBox="0 0 20 8"><path d="M8.5,5 L5.5,8 L11.5,8 Z" fill="#9a9a9a"/></svg>
<svg style="left:1052px;top:1100px;" width="20" height="8" viewBox="0 0 20 8"><path d="M3.5,6 L13.5,6 L12,8 L5,8 Z" fill="#9a9a9a"/></svg>
<svg style="left:1076px;top:1100px;" width="20" height="8" viewBox="0 0 20 8"><path d="M3.5,6 L13.5,6 L12,8 L5,8 Z" fill="#9a9a9a"/></svg>
<div class="a" style="left:1096px;top:1098px;width:1px;height:10px;background:#a8a8a8;"></div>
<div class="red" style="left:15px;top:228px;width:1112px;height:33px"></div>
<div class="red" style="left:18px;top:289px;width:1098px;height:809px"></div>
</body></html>
